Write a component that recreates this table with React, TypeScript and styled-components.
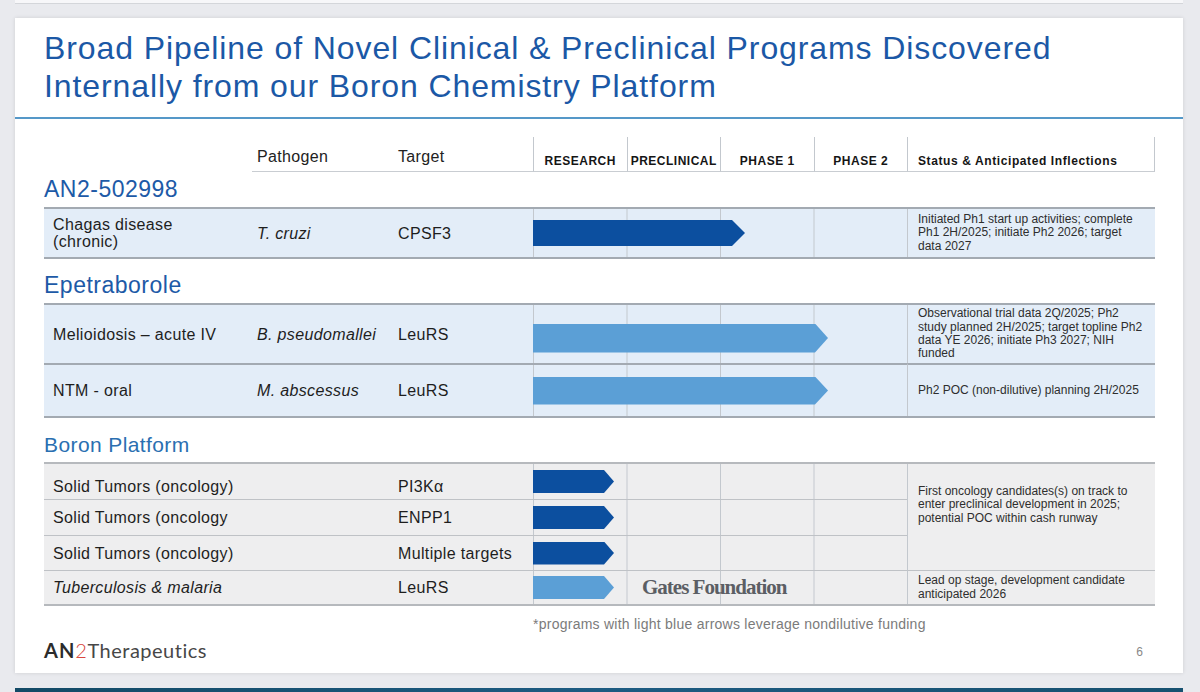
import React from 'react';
import styled, { createGlobalStyle, css } from 'styled-components';

const COLUMNS = '208px 140px 141px 93.5px 93.5px 93.5px 93.5px 248px';

const GlobalStyle = createGlobalStyle`
  html, body {
    margin: 0;
    padding: 0;
    background: #e9eaee;
    overflow: hidden;
  }
  body {
    font-family: "Liberation Sans", Arial, sans-serif;
  }
  * {
    box-sizing: border-box;
  }
`;

const Page = styled.div`
  width: 1200px;
  height: 692px;
  padding-left: 15px;
  display: flex;
  flex-direction: column;
`;

const PrevSlide = styled.div`
  width: 1168px;
  height: 4px;
  background: #f7f7f9;
  border-bottom: 1px solid #d4d6da;
`;

const Slide = styled.div`
  margin-top: 14px;
  width: 1168px;
  height: 656px;
  background: #fff;
  box-shadow: 0 0 4px rgba(0, 0, 0, 0.12);
  display: flex;
  flex-direction: column;
`;

const NextSlide = styled.div`
  margin-top: 15px;
  width: 1168px;
  height: 4px;
  background: linear-gradient(90deg, #134a66, #1d5b82 50%, #175170);
`;

const Title = styled.h1`
  margin: 0;
  padding: 11px 0 0 29px;
  font-size: 32px;
  line-height: 38px;
  font-weight: 400;
  letter-spacing: 0.9px;
  color: #1b58a6;
`;

const Rule = styled.div`
  margin-top: 12px;
  height: 2px;
  background: #5598c8;
`;

const Table = styled.div`
  margin: 18px 0 0 29px;
  width: 1111px;
`;

const HeaderRow = styled.div`
  display: grid;
  grid-template-columns: ${COLUMNS};
  height: 35px;
`;

const HeadText = styled.div<{ $pad: number }>`
  display: flex;
  align-items: flex-end;
  padding: 0 0 5px ${p => p.$pad}px;
  border-bottom: 1px solid #c9cdd2;
  font-size: 16px;
  line-height: 18px;
  letter-spacing: 0.35px;
  color: #222;
`;

const StageHead = styled.div`
  display: flex;
  align-items: flex-end;
  justify-content: center;
  padding-bottom: 3px;
  border-left: 1px solid #c3c8ce;
  border-bottom: 1px solid #c9cdd2;
  font-size: 12px;
  line-height: 14px;
  font-weight: 700;
  letter-spacing: 0.5px;
  color: #151515;
  white-space: nowrap;
`;

const StatusHead = styled(StageHead)`
  justify-content: flex-start;
  padding-left: 10px;
  border-right: 1px solid #c3c8ce;
  letter-spacing: 0.6px;
`;

const SectionTitle = styled.div<{ $first?: boolean; $minor?: boolean }>`
  height: ${p => (p.$first ? 35 : 44)}px;
  display: flex;
  align-items: flex-end;
  padding-bottom: 5px;
  font-size: ${p => (p.$minor ? 21 : 23)}px;
  line-height: ${p => (p.$minor ? 24 : 26)}px;
  letter-spacing: ${p => (p.$minor ? 0.4 : 0.5)}px;
  color: ${p => (p.$minor ? '#2a6fb1' : '#1d5aa7')};
`;

const GroupGrid = styled.div<{ $tone: 'blue' | 'grey'; $rows: string }>`
  display: grid;
  grid-template-columns: ${COLUMNS};
  grid-template-rows: ${p => p.$rows};
  background: ${p => (p.$tone === 'blue' ? '#e3edf8' : '#eeeeef')};
  border-top: 2px solid ${p => (p.$tone === 'blue' ? '#a3aab2' : '#b6b9bd')};
  border-bottom: 2px solid ${p => (p.$tone === 'blue' ? '#a3aab2' : '#b6b9bd')};
  --divider: ${p => (p.$tone === 'blue' ? '2px solid #a3aab2' : '1px solid #bfc2c6')};
`;

const divided = css<{ $divided?: boolean }>`
  ${p => p.$divided && 'border-top: var(--divider);'}
`;

const TextCell = styled.div<{ $pad: number; $italic?: boolean; $divided?: boolean; $drop?: number }>`
  display: flex;
  align-items: center;
  padding: ${p => p.$drop ?? 0}px 0 0 ${p => p.$pad}px;
  font-size: 16px;
  line-height: 17px;
  letter-spacing: 0.35px;
  color: #1e1e1e;
  font-style: ${p => (p.$italic ? 'italic' : 'normal')};
  white-space: nowrap;
  ${divided}
`;

const StageCell = styled.div<{ $divided?: boolean }>`
  grid-column: span 4;
  display: flex;
  align-items: center;
  background-image: linear-gradient(to right, #c3c8ce 1px, transparent 1px);
  background-size: 93.5px 100%;
  ${divided}
`;

const Arrow = styled.div<{ $light?: boolean; $h: number; $tip: number; $drop?: number }>`
  flex: none;
  height: ${p => p.$h}px;
  margin-top: ${p => p.$drop ?? 0}px;
  background: ${p => (p.$light ? '#5b9fd6' : '#0c4f9f')};
  clip-path: polygon(
    0 0,
    calc(100% - ${p => p.$tip}px) 0,
    100% 50%,
    calc(100% - ${p => p.$tip}px) 100%,
    0 100%
  );
`;

const Partner = styled.span`
  margin-left: 28px;
  font-family: "Liberation Serif", "Times New Roman", serif;
  font-size: 21px;
  font-weight: 700;
  letter-spacing: -1px;
  color: #5b5e64;
  white-space: nowrap;
`;

const StatusCell = styled.div<{ $span: number; $divided?: boolean; $top?: number }>`
  grid-column: 8;
  grid-row: span ${p => p.$span};
  display: flex;
  flex-direction: column;
  justify-content: ${p => (p.$top ? 'flex-start' : 'center')};
  padding: ${p => p.$top ?? 0}px 6px 0 10px;
  border-left: 1px solid #c3c8ce;
  font-size: 12px;
  line-height: 13.3px;
  color: #2e2e2e;
  white-space: nowrap;
  ${divided}
`;

const Footnote = styled.div`
  margin: 10px 0 0 518px;
  font-size: 14px;
  line-height: 16px;
  letter-spacing: 0.25px;
  color: #7b7b7b;
`;

const Footer = styled.div`
  margin-top: 6px;
  padding: 0 40px 0 29px;
  height: 24px;
  display: flex;
  align-items: center;
  justify-content: space-between;
`;

const Logo = styled.div`
  font-family: Lato, "Noto Sans", sans-serif;
  font-size: 20px;
  line-height: 24px;
  letter-spacing: 0.5px;
  color: #474747;
`;

const LogoBold = styled.span`
  font-weight: 700;
  letter-spacing: 1px;
  color: #2c2c2c;
`;

const LogoTwo = styled.span`
  font-weight: 300;
  color: #d8453c;
`;

const PageNumber = styled.span`
  padding-top: 4px;
  font-size: 12px;
  color: #888;
`;

type Program = {
  indication: React.ReactNode;
  italic?: boolean;
  pathogen?: string;
  target: string;
  reach: number;
  arrowH: number;
  tip: number;
  arrowDrop?: number;
  textDrop?: number;
  light?: boolean;
  partner?: string;
  status?: string[];
  span?: number;
  statusTop?: number;
};

type Group = {
  title: string;
  minor?: boolean;
  tone: 'blue' | 'grey';
  heights: number[];
  programs: Program[];
};

const groups: Group[] = [
  {
    title: 'AN2-502998',
    tone: 'blue',
    heights: [48],
    programs: [
      {
        indication: (
          <>
            Chagas disease
            <br />
            (chronic)
          </>
        ),
        pathogen: 'T. cruzi',
        target: 'CPSF3',
        reach: 212,
        arrowH: 26,
        tip: 13,
        status: [
          'Initiated Ph1 start up activities; complete',
          'Ph1 2H/2025; initiate Ph2 2026; target',
          'data 2027',
        ],
      },
    ],
  },
  {
    title: 'Epetraborole',
    tone: 'blue',
    heights: [58, 53],
    programs: [
      {
        indication: 'Melioidosis – acute IV',
        pathogen: 'B. pseudomallei',
        target: 'LeuRS',
        reach: 295,
        arrowH: 29,
        tip: 13,
        arrowDrop: 8,
        light: true,
        status: [
          'Observational trial data 2Q/2025; Ph2',
          'study planned 2H/2025; target topline Ph2',
          'data YE 2026; initiate Ph3 2027; NIH',
          'funded',
        ],
      },
      {
        indication: 'NTM - oral',
        pathogen: 'M. abscessus',
        target: 'LeuRS',
        reach: 295,
        arrowH: 28,
        tip: 13,
        light: true,
        status: ['Ph2 POC (non-dilutive) planning 2H/2025'],
      },
    ],
  },
  {
    title: 'Boron Platform',
    minor: true,
    tone: 'grey',
    heights: [35, 36, 35, 34],
    programs: [
      {
        indication: 'Solid Tumors (oncology)',
        target: 'PI3Kα',
        reach: 81,
        arrowH: 23,
        tip: 10,
        textDrop: 10,
        span: 3,
        statusTop: 21,
        status: [
          'First oncology candidates(s) on track to',
          'enter preclinical development in 2025;',
          'potential POC within cash runway',
        ],
      },
      { indication: 'Solid Tumors (oncology', target: 'ENPP1', reach: 81, arrowH: 23, tip: 10 },
      { indication: 'Solid Tumors (oncology)', target: 'Multiple targets', reach: 81, arrowH: 23, tip: 10 },
      {
        indication: 'Tuberculosis & malaria',
        italic: true,
        target: 'LeuRS',
        reach: 81,
        arrowH: 23,
        tip: 10,
        light: true,
        partner: 'Gates Foundation',
        status: ['Lead op stage, development candidate', 'anticipated 2026'],
      },
    ],
  },
];

const stages = ['RESEARCH', 'PRECLINICAL', 'PHASE 1', 'PHASE 2'];

const App: React.FC = () => {
  return (
    <>
      <GlobalStyle />
      <Page>
        <PrevSlide />
        <Slide>
          <Title>
            Broad Pipeline of Novel Clinical &amp; Preclinical Programs Discovered
            <br />
            Internally from our Boron Chemistry Platform
          </Title>
          <Rule />
          <Table>
            <HeaderRow>
              <div />
              <HeadText $pad={5}>Pathogen</HeadText>
              <HeadText $pad={6}>Target</HeadText>
              {stages.map(s => (
                <StageHead key={s}>{s}</StageHead>
              ))}
              <StatusHead>Status &amp; Anticipated Inflections</StatusHead>
            </HeaderRow>

            {groups.map((g, gi) => (
              <React.Fragment key={g.title}>
                <SectionTitle $first={gi === 0} $minor={g.minor}>
                  {g.title}
                </SectionTitle>
                <GroupGrid $tone={g.tone} $rows={g.heights.map(h => `${h}px`).join(' ')}>
                  {g.programs.map((p, i) => (
                    <React.Fragment key={i}>
                      <TextCell $pad={9} $italic={p.italic} $divided={i > 0} $drop={p.textDrop}>
                        {p.indication}
                      </TextCell>
                      <TextCell $pad={5} $italic $divided={i > 0} $drop={p.textDrop}>
                        {p.pathogen}
                      </TextCell>
                      <TextCell $pad={6} $divided={i > 0} $drop={p.textDrop}>
                        {p.target}
                      </TextCell>
                      <StageCell $divided={i > 0}>
                        <Arrow
                          $light={p.light}
                          $h={p.arrowH}
                          $tip={p.tip}
                          $drop={p.arrowDrop}
                          style={{ width: p.reach }}
                        />
                        {p.partner && <Partner>{p.partner}</Partner>}
                      </StageCell>
                      {p.status && (
                        <StatusCell $span={p.span ?? 1} $top={p.statusTop} $divided={i > 0}>
                          {p.status.map(line => (
                            <span key={line}>{line}</span>
                          ))}
                        </StatusCell>
                      )}
                    </React.Fragment>
                  ))}
                </GroupGrid>
              </React.Fragment>
            ))}
          </Table>
          <Footnote>*programs with light blue arrows leverage nondilutive funding</Footnote>
          <Footer>
            <Logo>
              <LogoBold>AN</LogoBold>
              <LogoTwo>2</LogoTwo>Therapeutics
            </Logo>
            <PageNumber>6</PageNumber>
          </Footer>
        </Slide>
        <NextSlide />
      </Page>
    </>
  );
};

export default App;
